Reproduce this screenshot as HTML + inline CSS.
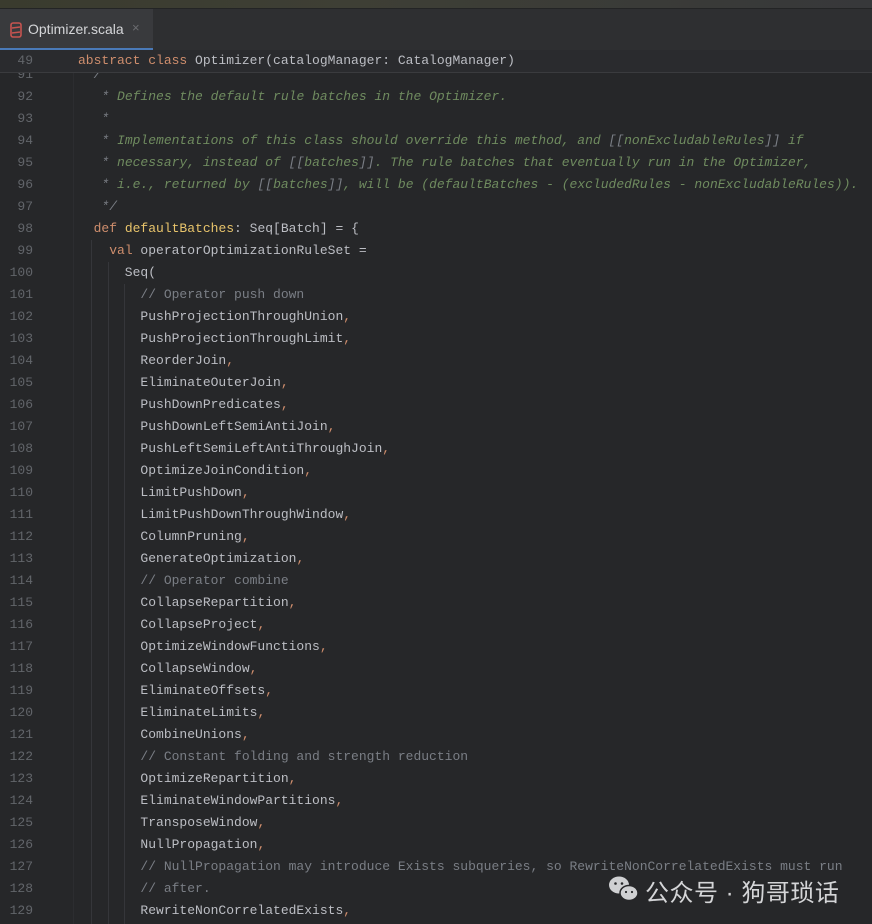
<!DOCTYPE html>
<html><head><meta charset="utf-8"><style>
*{margin:0;padding:0;box-sizing:border-box}
body{width:872px;height:924px;background:#262729;overflow:hidden;position:relative;font-family:"Liberation Mono",monospace;font-size:13px}
.top{position:absolute;left:0;top:0;width:872px;height:8px;background:linear-gradient(90deg,#3a3b2e,#3e3f35 40%,#37383a)}
.tabs{position:absolute;left:0;top:8px;width:872px;height:42px;background:#2e2f31;border-top:1px solid #232425}
.tab{position:absolute;left:0;top:0;width:153px;height:42px;background:#393a3d;border-bottom:3px solid #4a7ab8}
.tab span{position:absolute;left:28px;top:12px;font-family:"Liberation Sans",sans-serif;font-size:14px;color:#d4d5d8}
.tab i{position:absolute;left:132px;top:11px;font-style:normal;font-family:"Liberation Sans",sans-serif;color:#6b6c70;font-size:13px}
.code{position:absolute;left:0;top:64px;width:872px}
.r{height:22px;line-height:22px;white-space:pre;position:relative;color:#bcbec4}
.n{position:absolute;left:0;width:33px;text-align:right;color:#62656a}
.t{position:absolute;left:78px}
.k{color:#cf8e6d}.c{color:#7a7e85}.d{color:#6f8b5f;font-style:italic}.dg{color:#7a7e85;font-style:italic}.f{color:#e8c46b}.p{color:#cf8e6d}
.sticky{position:absolute;left:0;top:50px;width:872px;height:23px;background:#2a2b2e;border-bottom:1px solid #3a3b3e}
.gut{position:absolute;left:73px;top:50px;width:1px;height:874px;background:#2c2d30}
.g{position:absolute;top:240px;width:1px;background:#35363a}
.wm{position:absolute;left:645px;top:873px;font-family:"Liberation Sans","Noto Sans CJK SC",sans-serif;font-size:24px;color:#d4d5d7;letter-spacing:0.5px}
</style></head><body>
<div class="top"></div>
<div class="tabs"><div class="tab"><svg style="position:absolute;left:10px;top:13px" width="12" height="16"><rect x="1" y="1" width="10" height="14" rx="2" fill="none" stroke="#c75450" stroke-width="1.6"/><line x1="2" y1="6" x2="10" y2="5" stroke="#c75450" stroke-width="1.4"/><line x1="2" y1="11" x2="10" y2="10" stroke="#c75450" stroke-width="1.4"/></svg><span>Optimizer.scala</span><i>×</i></div></div>
<div class="gut"></div>
<div class="g" style="left:91px;height:684px"></div>
<div class="g" style="left:108px;top:262px;height:662px"></div>
<div class="g" style="left:124px;top:284px;height:640px"></div>
<div class="code">
<div class="r"><span class="n">91</span><span class="t"><span class="dg">  /**</span></span></div>
<div class="r"><span class="n">92</span><span class="t"><span class="dg">   * </span><span class="d">Defines the default rule batches in the Optimizer.</span></span></div>
<div class="r"><span class="n">93</span><span class="t"><span class="dg">   *</span></span></div>
<div class="r"><span class="n">94</span><span class="t"><span class="dg">   * </span><span class="d">Implementations of this class should override this method, and </span><span class="dg">[[</span><span class="d">nonExcludableRules</span><span class="dg">]]</span><span class="d"> if</span></span></div>
<div class="r"><span class="n">95</span><span class="t"><span class="dg">   * </span><span class="d">necessary, instead of </span><span class="dg">[[</span><span class="d">batches</span><span class="dg">]]</span><span class="d">. The rule batches that eventually run in the Optimizer,</span></span></div>
<div class="r"><span class="n">96</span><span class="t"><span class="dg">   * </span><span class="d">i.e., returned by </span><span class="dg">[[</span><span class="d">batches</span><span class="dg">]]</span><span class="d">, will be (defaultBatches - (excludedRules - nonExcludableRules)).</span></span></div>
<div class="r"><span class="n">97</span><span class="t"><span class="dg">   */</span></span></div>
<div class="r"><span class="n">98</span><span class="t">  <span class="k">def</span> <span class="f">defaultBatches</span>: Seq[Batch] = {</span></div>
<div class="r"><span class="n">99</span><span class="t">    <span class="k">val</span> operatorOptimizationRuleSet =</span></div>
<div class="r"><span class="n">100</span><span class="t">      Seq(</span></div>
<div class="r"><span class="n">101</span><span class="t"><span class="c">        // Operator push down</span></span></div>
<div class="r"><span class="n">102</span><span class="t">        PushProjectionThroughUnion<span class="p">,</span></span></div>
<div class="r"><span class="n">103</span><span class="t">        PushProjectionThroughLimit<span class="p">,</span></span></div>
<div class="r"><span class="n">104</span><span class="t">        ReorderJoin<span class="p">,</span></span></div>
<div class="r"><span class="n">105</span><span class="t">        EliminateOuterJoin<span class="p">,</span></span></div>
<div class="r"><span class="n">106</span><span class="t">        PushDownPredicates<span class="p">,</span></span></div>
<div class="r"><span class="n">107</span><span class="t">        PushDownLeftSemiAntiJoin<span class="p">,</span></span></div>
<div class="r"><span class="n">108</span><span class="t">        PushLeftSemiLeftAntiThroughJoin<span class="p">,</span></span></div>
<div class="r"><span class="n">109</span><span class="t">        OptimizeJoinCondition<span class="p">,</span></span></div>
<div class="r"><span class="n">110</span><span class="t">        LimitPushDown<span class="p">,</span></span></div>
<div class="r"><span class="n">111</span><span class="t">        LimitPushDownThroughWindow<span class="p">,</span></span></div>
<div class="r"><span class="n">112</span><span class="t">        ColumnPruning<span class="p">,</span></span></div>
<div class="r"><span class="n">113</span><span class="t">        GenerateOptimization<span class="p">,</span></span></div>
<div class="r"><span class="n">114</span><span class="t"><span class="c">        // Operator combine</span></span></div>
<div class="r"><span class="n">115</span><span class="t">        CollapseRepartition<span class="p">,</span></span></div>
<div class="r"><span class="n">116</span><span class="t">        CollapseProject<span class="p">,</span></span></div>
<div class="r"><span class="n">117</span><span class="t">        OptimizeWindowFunctions<span class="p">,</span></span></div>
<div class="r"><span class="n">118</span><span class="t">        CollapseWindow<span class="p">,</span></span></div>
<div class="r"><span class="n">119</span><span class="t">        EliminateOffsets<span class="p">,</span></span></div>
<div class="r"><span class="n">120</span><span class="t">        EliminateLimits<span class="p">,</span></span></div>
<div class="r"><span class="n">121</span><span class="t">        CombineUnions<span class="p">,</span></span></div>
<div class="r"><span class="n">122</span><span class="t"><span class="c">        // Constant folding and strength reduction</span></span></div>
<div class="r"><span class="n">123</span><span class="t">        OptimizeRepartition<span class="p">,</span></span></div>
<div class="r"><span class="n">124</span><span class="t">        EliminateWindowPartitions<span class="p">,</span></span></div>
<div class="r"><span class="n">125</span><span class="t">        TransposeWindow<span class="p">,</span></span></div>
<div class="r"><span class="n">126</span><span class="t">        NullPropagation<span class="p">,</span></span></div>
<div class="r"><span class="n">127</span><span class="t"><span class="c">        // NullPropagation may introduce Exists subqueries, so RewriteNonCorrelatedExists must run</span></span></div>
<div class="r"><span class="n">128</span><span class="t"><span class="c">        // after.</span></span></div>
<div class="r"><span class="n">129</span><span class="t">        RewriteNonCorrelatedExists<span class="p">,</span></span></div>
</div>
<div class="sticky"><div class="r" style="top:0"><span class="n">49</span><span class="t"><span class="k">abstract class</span> Optimizer(catalogManager: CatalogManager)</span></div></div>
<svg style="position:absolute;left:608px;top:875px" width="32" height="28"><ellipse cx="11" cy="10" rx="10" ry="8.5" fill="#cfd0d2"/><ellipse cx="21" cy="18" rx="9" ry="7.5" fill="#cfd0d2" stroke="#262729" stroke-width="1.5"/><circle cx="7.5" cy="8.5" r="1.3" fill="#262729"/><circle cx="14" cy="8.5" r="1.3" fill="#262729"/><circle cx="18" cy="17" r="1.1" fill="#262729"/><circle cx="24" cy="17" r="1.1" fill="#262729"/></svg>
<div class="wm">公众号 · 狗哥琐话</div>
</body></html>
